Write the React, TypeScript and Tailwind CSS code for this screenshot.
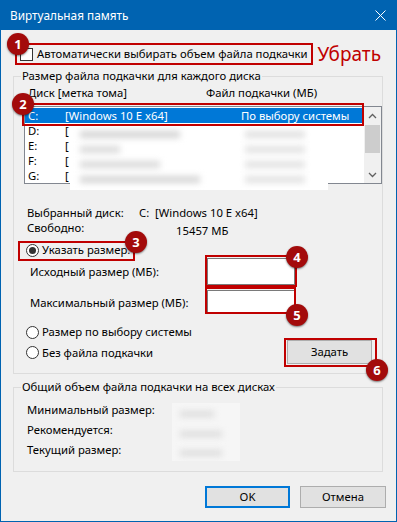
import React from "react";

function Radio({ checked }: { checked?: boolean }) {
  return (
    <div className="flex h-[13px] w-[13px] shrink-0 items-center justify-center rounded-full border border-[#333333] bg-white">
      {checked ? <div className="h-[7px] w-[7px] rounded-full bg-[#333333]" /> : null}
    </div>
  );
}

function Chevron({ up }: { up?: boolean }) {
  return (
    <svg width="9" height="6" viewBox="0 0 9 6">
      <path
        d={up ? "M1 5 L4.5 1.5 L8 5" : "M1 1 L4.5 4.5 L8 1"}
        fill="none"
        stroke="#606060"
        strokeWidth="1.3"
      />
    </svg>
  );
}

export default function App() {
  return (
    <div className="relative flex h-[522px] w-[397px] flex-col overflow-hidden bg-[#0063b1] font-['Noto_Sans',sans-serif] text-[11.3px] leading-[16px] text-black">
      {/* Title bar */}
      <div className="flex h-[30px] shrink-0 items-center pl-[10px] pr-[11px] text-white">
        <span className="text-[11.8px] leading-[16px]">Виртуальная память</span>
        <svg className="ml-auto" width="11" height="11" viewBox="0 0 11 11">
          <path d="M0.5 0.5 L10.5 10.5 M10.5 0.5 L0.5 10.5" stroke="#ffffff" strokeWidth="1" fill="none" />
        </svg>
      </div>

      {/* Body */}
      <div className="mx-[1px] mb-[1px] flex flex-1 flex-col bg-[#f0f0f0]">
        {/* Checkbox row */}
        <div className="mt-[14px] flex h-[20px] items-center pl-[19px]">
          <div className="h-[13px] w-[13px] shrink-0 border border-[#333333] bg-white" />
          <span className="ml-[4px] whitespace-nowrap">Автоматически выбирать объем файла подкачки</span>
          <span className="ml-auto mr-[15px] text-[19px] leading-[22px] text-[#c00000]">Убрать</span>
        </div>

        {/* Group 1 */}
        <div className="relative ml-[12px] mt-[12px] h-[298px] w-[370px] shrink-0 border border-[#dcdcdc]">
          <div className="-mt-[9px] ml-[7px] w-fit bg-[#f0f0f0] px-[1px] leading-[16px]">
            Размер файла подкачки для каждого диска
          </div>
          {/* Header */}
          <div className="mt-[1px] flex h-[16px] items-center pl-[14px]">
            <span className="w-[178px]">Диск [метка тома]</span>
            <span>Файл подкачки (МБ)</span>
          </div>
          {/* Listbox */}
          <div className="ml-[10px] mt-[5px] flex h-[78px] w-[358px] border border-[#828790] bg-white">
            <div className="flex flex-1 flex-col pt-[1px]">
              <div className="flex h-[15px] items-center bg-[#0078d7] leading-[15px] text-white">
                <span className="w-[40px] pl-[3px]">C:</span>
                <span className="w-[176px]">[Windows 10 E x64]</span>
                <span>По выбору системы</span>
              </div>
              {["D:", "E:", "F:", "G:"].map((d) => (
                <div key={d} className="flex h-[15px] items-center leading-[15px]">
                  <span className="w-[40px] pl-[3px]">{d}</span>
                  <span>[</span>
                </div>
              ))}
            </div>
            <div className="flex w-[17px] flex-col items-center bg-[#f0f0f0]">
              <div className="flex h-[17px] items-center justify-center">
                <Chevron up />
              </div>
              <div className="mt-[1px] h-[28px] w-[15px] bg-[#cdcdcd]" />
              <div className="mt-auto flex h-[17px] items-center justify-center">
                <Chevron />
              </div>
            </div>
          </div>
          {/* Blurred patch over listbox */}
          <div className="absolute left-[56px] top-[48px] h-[65px] w-[258px] overflow-hidden bg-white">
            <div className="absolute left-[10px] top-[6px] h-[7px] w-[100px] bg-[#d4d4d4] blur-[3px]" />
            <div className="absolute left-[175px] top-[6px] h-[7px] w-[60px] bg-[#e0e0e0] blur-[3px]" />
            <div className="absolute left-[10px] top-[21px] h-[7px] w-[40px] bg-[#dadada] blur-[3px]" />
            <div className="absolute left-[175px] top-[21px] h-[7px] w-[60px] bg-[#e2e2e2] blur-[3px]" />
            <div className="absolute left-[10px] top-[36px] h-[7px] w-[80px] bg-[#dadada] blur-[3px]" />
            <div className="absolute left-[175px] top-[36px] h-[7px] w-[60px] bg-[#e2e2e2] blur-[3px]" />
            <div className="absolute left-[10px] top-[51px] h-[7px] w-[120px] bg-[#d6d6d6] blur-[3px]" />
            <div className="absolute left-[175px] top-[51px] h-[7px] w-[60px] bg-[#e2e2e2] blur-[3px]" />
          </div>

          {/* Selected disk info */}
          <div className="mt-[21px] flex h-[15px] items-center pl-[13px] leading-[15px]">
            <span className="w-[112px]">Выбранный диск:</span>
            <span className="whitespace-pre">C:  [Windows 10 E x64]</span>
          </div>
          <div className="flex h-[15px] items-start pl-[13px] leading-[15px]">
            <span className="w-[112px]">Свободно:</span>
            <span className="ml-[37px] mt-[3px]">15457 МБ</span>
          </div>

          {/* Custom size radio */}
          <div className="mt-[7px] flex h-[16px] items-center pl-[12px]">
            <Radio checked />
            <span className="ml-[3px]">Указать размер:</span>
          </div>
          <div className="flex h-[27px] items-center pl-[16px]">
            <span className="w-[177px]">Исходный размер (МБ):</span>
            <div className="h-[27px] w-[88px] border border-[#7a7a7a] bg-white" />
          </div>
          <div className="mt-[5px] flex h-[23px] items-center pl-[16px]">
            <span className="w-[177px] pt-[3px]">Максимальный размер (МБ):</span>
            <div className="h-[23px] w-[88px] border border-[#7a7a7a] bg-white" />
          </div>
          <div className="mt-[11px] flex h-[16px] items-center pl-[12px]">
            <Radio />
            <span className="ml-[3px]">Размер по выбору системы</span>
          </div>
          <div className="flex h-[24px] items-center pl-[12px]">
            <Radio />
            <span className="ml-[3px] mt-[2px]">Без файла подкачки</span>
            <div className="ml-auto mr-[10px] flex h-[24px] w-[85px] items-center justify-center border border-[#adadad] bg-[#e1e1e1]">
              Задать
            </div>
          </div>
        </div>

        {/* Group 2 */}
        <div className="relative ml-[12px] mt-[13px] h-[85px] w-[370px] shrink-0 border border-[#dcdcdc]">
          <div className="-mt-[9px] ml-[7px] w-fit bg-[#f0f0f0] px-[1px] leading-[16px]">
            Общий объем файла подкачки на всех дисках
          </div>
          <div className="mt-[5px] flex flex-col pl-[13px]">
            <div className="flex h-[20px] items-center">Минимальный размер:</div>
            <div className="flex h-[20px] items-center">Рекомендуется:</div>
            <div className="flex h-[20px] items-center">Текущий размер:</div>
          </div>
          <div className="absolute left-[158px] top-[15px] h-[58px] w-[68px] overflow-hidden bg-[#f6f6f6]">
            <div className="absolute left-[8px] top-[8px] h-[6px] w-[34px] bg-[#dcdcdc] blur-[3px]" />
            <div className="absolute left-[8px] top-[28px] h-[6px] w-[42px] bg-[#dcdcdc] blur-[3px]" />
            <div className="absolute left-[8px] top-[47px] h-[6px] w-[42px] bg-[#dcdcdc] blur-[3px]" />
          </div>
        </div>

        {/* Buttons */}
        <div className="mt-[14px] flex justify-end gap-[10px] pr-[10px]">
          <div className="flex h-[22px] w-[85px] items-center justify-center border-2 border-[#0078d7] bg-[#e1e1e1]">
            OK
          </div>
          <div className="flex h-[22px] w-[86px] items-center justify-center border border-[#adadad] bg-[#e1e1e1]">
            Отмена
          </div>
        </div>
      </div>

      {/* Annotation rectangles */}
      <div className="pointer-events-none absolute left-[15px] top-[43px] h-[22px] w-[298px] border-2 border-[#c00000]" />
      <div className="pointer-events-none absolute left-[22px] top-[103px] h-[23px] w-[342px] border-2 border-[#c00000]" />
      <div className="pointer-events-none absolute left-[18px] top-[241px] h-[20px] w-[117px] border-2 border-[#c00000]" />
      <div className="pointer-events-none absolute left-[205px] top-[255px] h-[32px] w-[92px] border-2 border-[#c00000]" />
      <div className="pointer-events-none absolute left-[205px] top-[287px] h-[27px] w-[91px] border-2 border-[#c00000]" />
      <div className="pointer-events-none absolute left-[284px] top-[338px] h-[29px] w-[93px] border-2 border-[#c00000]" />

      {/* Annotation badges */}
      <div className="absolute left-[7px] top-[33px] flex h-[22px] w-[22px] items-center justify-center rounded-full bg-[#a30b0b] text-[13px] font-bold text-white shadow-[0_1px_2px_rgba(0,0,0,0.5)]">1</div>
      <div className="absolute left-[12px] top-[93px] flex h-[22px] w-[22px] items-center justify-center rounded-full bg-[#a30b0b] text-[13px] font-bold text-white shadow-[0_1px_2px_rgba(0,0,0,0.5)]">2</div>
      <div className="absolute left-[125px] top-[231px] flex h-[22px] w-[22px] items-center justify-center rounded-full bg-[#a30b0b] text-[13px] font-bold text-white shadow-[0_1px_2px_rgba(0,0,0,0.5)]">3</div>
      <div className="absolute left-[286px] top-[246px] flex h-[22px] w-[22px] items-center justify-center rounded-full bg-[#a30b0b] text-[13px] font-bold text-white shadow-[0_1px_2px_rgba(0,0,0,0.5)]">4</div>
      <div className="absolute left-[286px] top-[304px] flex h-[22px] w-[22px] items-center justify-center rounded-full bg-[#a30b0b] text-[13px] font-bold text-white shadow-[0_1px_2px_rgba(0,0,0,0.5)]">5</div>
      <div className="absolute left-[366px] top-[359px] flex h-[22px] w-[22px] items-center justify-center rounded-full bg-[#a30b0b] text-[13px] font-bold text-white shadow-[0_1px_2px_rgba(0,0,0,0.5)]">6</div>
    </div>
  );
}
